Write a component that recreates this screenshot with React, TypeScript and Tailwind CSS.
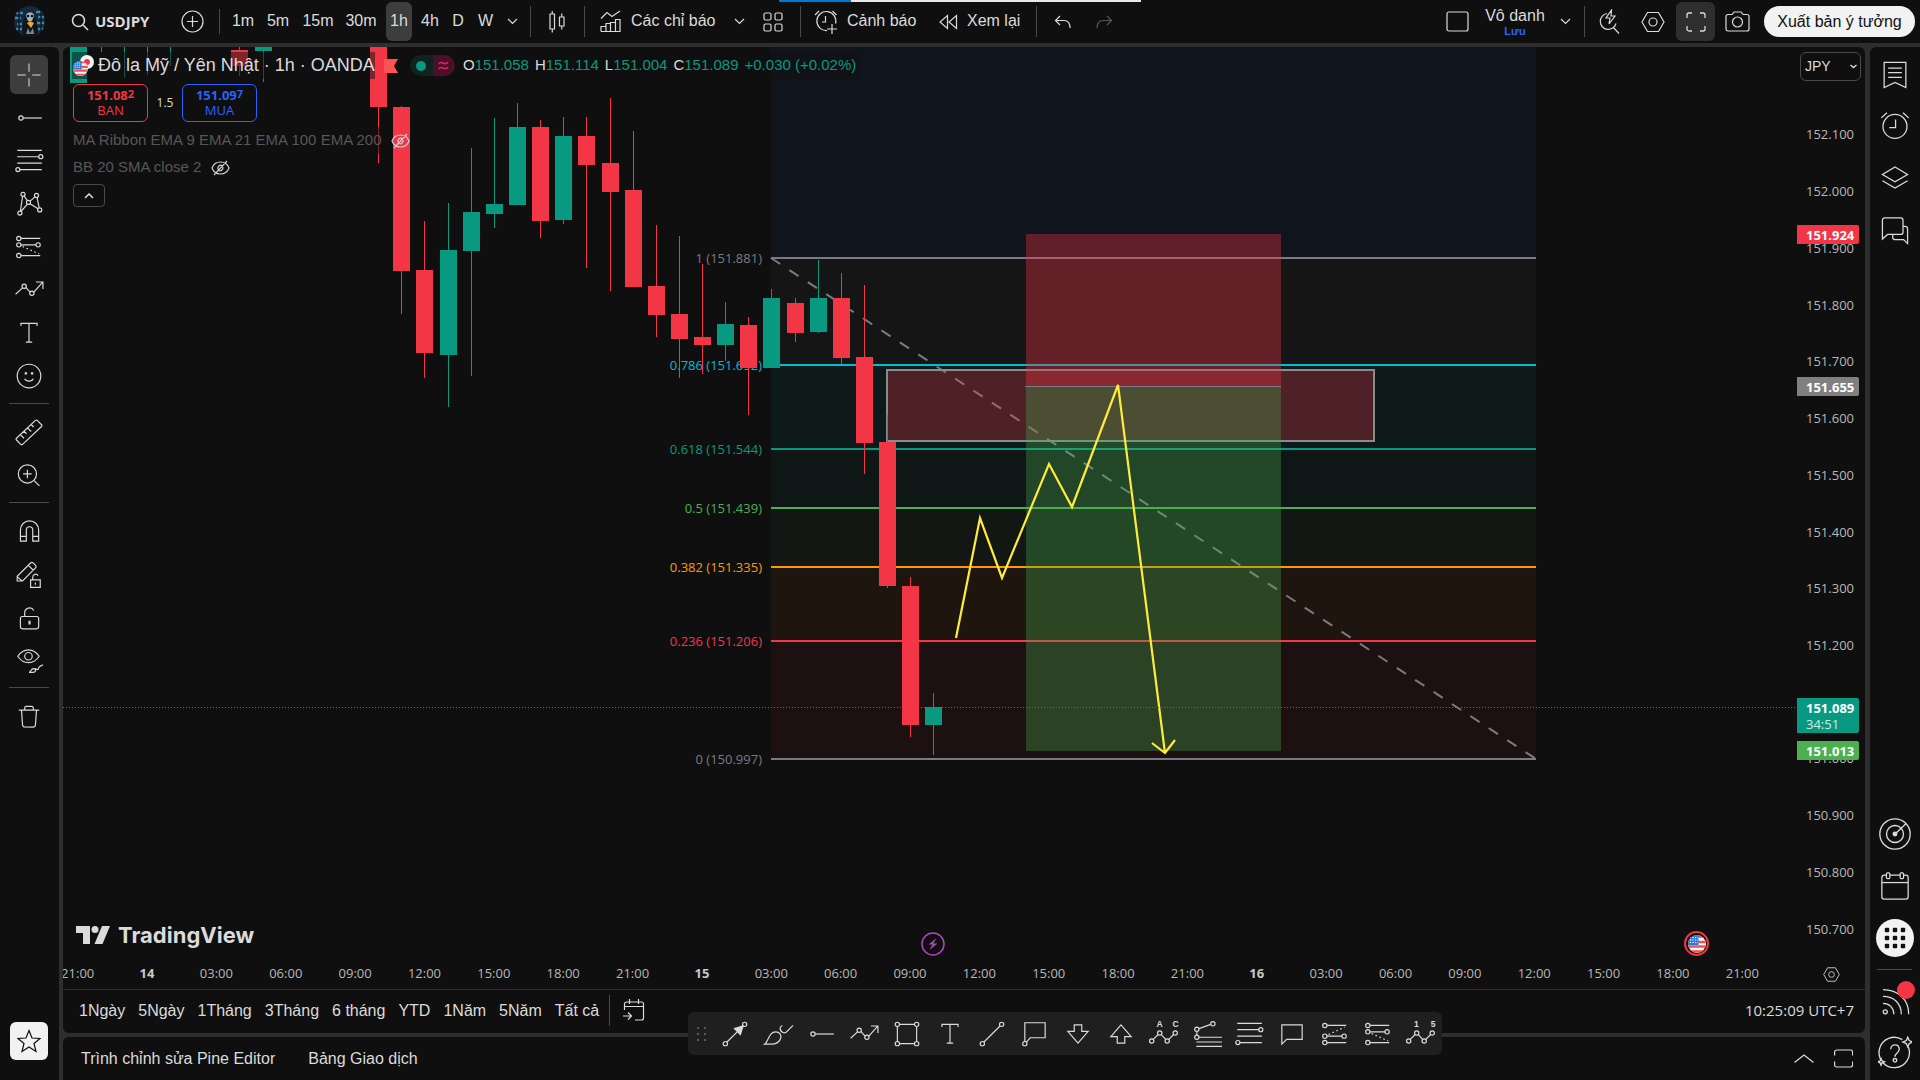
import { useState } from 'react';
import type { ReactNode } from 'react';

type IconProps = {
  children: ReactNode;
  size?: number;
  className?: string;
};

function Icon({ children, size = 31, className = '' }: IconProps) {
  return (
    <svg
      width={size}
      height={size}
      viewBox="0 0 28 28"
      fill="none"
      stroke="currentColor"
      strokeWidth={1.1}
      className={`shrink-0 ${className}`}
      aria-hidden="true"
    >
      {children}
    </svg>
  );
}

// Shared drawings: the same tool shows up in the left bar and in the favourites bar
const horizontalRay = (
  <>
    <circle cx="6.5" cy="14" r="2" />
    <path d="M8.5 14H26" />
  </>
);

const fibRetracement = (
  <>
    <path d="M3 4h23M3 10h20.500M3 16h23M5.500 22H26" />
    <circle cx="25" cy="10" r="1.9" />
    <circle cx="3.600" cy="22" r="1.9" />
  </>
);

const shortPosition = (
  <>
    <circle cx="4.500" cy="6" r="2" />
    <circle cx="4.500" cy="12" r="2" />
    <circle cx="22.500" cy="12" r="2" />
    <circle cx="4.500" cy="22" r="2" />
    <path d="M6.500 6H24.500M6.500 12h14M6.500 22h18" />
    <path d="M8 13.500l15.500 7" strokeDasharray="1.500 2.500" />
  </>
);

const longPosition = (
  <>
    <circle cx="4.500" cy="6" r="2" />
    <circle cx="4.500" cy="16" r="2" />
    <circle cx="22.500" cy="16" r="2" />
    <circle cx="4.500" cy="22" r="2" />
    <path d="M6.500 6H24.500M6.500 16h14M6.500 22h18" />
    <path d="M8 14.500l15-7" strokeDasharray="1.500 2.500" />
  </>
);

const polylineArrow = (
  <>
    <path d="M1.500 18l6.500-6M11 11.500l4 4.500M18.500 16L27 6.500M20.500 6.500H27V13" />
    <circle cx="9.500" cy="10.500" r="2" />
    <circle cx="16.700" cy="17" r="2" />
  </>
);

const textTool = <path d="M6.500 7.500V5h15v2.500M14 5v17.500M11 22.500h6" />;

type Tool = { label: string; icon: ReactNode };

const cursorTools: Tool[] = [
  { label: 'Chữ thập', icon: <path d="M14 1.500v9M14 17.500v9M1.500 14h9M17.500 14h9" /> },
  { label: 'Tia ngang', icon: horizontalRay },
  { label: 'Fibonacci', icon: fibRetracement },
  {
    label: 'Mô hình',
    icon: (
      <>
        <circle cx="8.400" cy="5" r="1.9" />
        <circle cx="21" cy="6" r="1.9" />
        <circle cx="13.500" cy="12.500" r="1.9" />
        <circle cx="5.500" cy="22.500" r="1.9" />
        <circle cx="24" cy="19.500" r="1.9" />
        <path d="M8 7L6 20.500M9.500 6.700l3 4.200M15 11.300l4.600-4M21.500 8l2 9.600M15 13.700l7.400 4.800M12.500 14.200l-6 6.800" />
      </>
    ),
  },
  { label: 'Dự báo', icon: shortPosition },
  { label: 'Đường gấp khúc', icon: polylineArrow },
  { label: 'Văn bản', icon: textTool },
  {
    label: 'Biểu tượng',
    icon: (
      <>
        <circle cx="14" cy="14" r="11" />
        <path d="M10 16.500c1.500 3 6.500 3 8 0" />
        <path d="M10 11.500h2.200M15.800 11.500H18" strokeWidth="2" />
      </>
    ),
  },
];

const measureTools: Tool[] = [
  {
    label: 'Thước đo',
    icon: (
      <path d="M2.300 19.800L20 3.200a1.200 1.200 0 0 1 1.700 0l4 4a1.200 1.200 0 0 1 0 1.700L8 25.500a1.200 1.200 0 0 1-1.700 0l-4-4a1.200 1.200 0 0 1 0-1.700zM6 16.500l3.300 3.300M9.400 13.300l2.300 2.300M12.700 10.200l3.300 3.300M16 7l2.300 2.300" />
    ),
  },
  {
    label: 'Phóng to',
    icon: (
      <>
        <circle cx="12.500" cy="13" r="8.500" />
        <path d="M8.500 13h8M12.500 9v8M18.700 19.200l5 5" />
      </>
    ),
  },
];

const lockTools: Tool[] = [
  {
    label: 'Nam châm',
    icon: (
      <path d="M6 23.500V13a8.500 8.500 0 0 1 17 0v10.500h-5.500V13a3 3 0 0 0-6 0v10.500zM6 19h5.500M17.500 19H23" />
    ),
  },
  {
    label: 'Giữ chế độ vẽ',
    icon: (
      <>
        <path d="M3 20.500v-4.300L15.500 3.700a1.600 1.600 0 0 1 2.300 0l2.300 2.300a1.600 1.600 0 0 1 0 2.300L8 20.500zM13.500 6l4.500 4.500M3 16.500l4.500 4" />
        <path d="M15.500 19.500h9v7h-9zM17.500 19.500v-2.500a2.700 2.700 0 0 1 5-1.500M20 22v2" />
      </>
    ),
  },
  {
    label: 'Khoá',
    icon: (
      <>
        <rect x="6" y="13.500" width="17" height="11.500" rx="1.800" />
        <path d="M10 13.500V10A4.500 4.500 0 0 1 18.500 8" />
        <path d="M14.500 17.500V21" strokeWidth="2" />
      </>
    ),
  },
  {
    label: 'Ẩn bản vẽ',
    icon: (
      <>
        <path d="M3.500 10.500C9 2.500 18 2.500 23.500 10.500 18 18.500 9 18.500 3.500 10.500z" />
        <circle cx="13.500" cy="10.500" r="3.500" />
        <path d="M14 25.500c2 0 1.500-3.500 4.500-3.500 2 0 2.500 3.500-1 3.500zM20 21.500c.500 2 3 2 3 0 0-1 2-2 4-3" />
      </>
    ),
  },
];

const trashTool: Tool = {
  label: 'Xoá',
  icon: <path d="M4.500 8.500h19M10 8.500V6.500a1.500 1.500 0 0 1 1.500-1.500h5A1.500 1.500 0 0 1 18 6.500v2M7 8.500l1 14a2 2 0 0 0 2 1.800h8a2 2 0 0 0 2-1.800l1-14" />,
};

const waveLabel = 'fill-current stroke-none font-[Liberation_Sans] text-[8px] font-bold';

const elliottPoints = (
  <>
    <circle cx="2.500" cy="20.500" r="2" />
    <circle cx="10" cy="13" r="2" />
    <circle cx="17" cy="20.500" r="2" />
    <circle cx="24.500" cy="13" r="2" />
    <path d="M4 19l4.500-4.500M11.400 14.500l4.200 4.500M18.500 19l4.500-4.500" />
  </>
);

const favouriteTools: Tool[] = [
  {
    label: 'Mũi tên',
    icon: (
      <>
        <circle cx="5" cy="23" r="2" />
        <circle cx="23" cy="5" r="2" />
        <path d="M6.500 21.500L16.500 11.500" />
        <path d="M21.500 6.500l-2.500 8-5.500-5.500z" fill="currentColor" />
      </>
    ),
  },
  {
    label: 'Cọ vẽ',
    icon: (
      <path d="M1.500 23.500c4-2.500 3.500-11.500 10.500-11.500 3.500 0 5.500 3 4.500 6-1.200 4-5 5.500-9 5.500zM16 8.500c0 4.500 4.500 5.500 6.500 3l5.500-5.500M16 8.500c0-1.500 1-2 2-2.500" />
    ),
  },
  { label: 'Tia ngang', icon: horizontalRay },
  { label: 'Đường gấp khúc', icon: polylineArrow },
  {
    label: 'Hình chữ nhật',
    icon: (
      <>
        <circle cx="5" cy="5" r="2" />
        <circle cx="23" cy="5" r="2" />
        <circle cx="5" cy="23" r="2" />
        <circle cx="23" cy="23" r="2" />
        <path d="M7 5h14M7 23h14M5 7v14M23 7v14" />
      </>
    ),
  },
  { label: 'Văn bản', icon: textTool },
  {
    label: 'Đường xu hướng',
    icon: (
      <>
        <circle cx="5" cy="23" r="2" />
        <circle cx="23" cy="5" r="2" />
        <path d="M6.500 21.500l15-15" />
      </>
    ),
  },
  {
    label: 'Chú thích',
    icon: (
      <>
        <circle cx="4.500" cy="23" r="2" />
        <path d="M4.500 21V3.500h19v14H9.500l-3.500 4" />
      </>
    ),
  },
  { label: 'Mũi tên xuống', icon: <path d="M10.500 5.500h7v6h6L14 22.500 4.500 11.500h6z" /> },
  { label: 'Mũi tên lên', icon: <path d="M10.500 22.500h7v-6h6L14 5.500 4.500 16.500h6z" /> },
  {
    label: 'Sóng ABC',
    icon: (
      <>
        {elliottPoints}
        <text x="7" y="7" className={waveLabel}>A</text>
        <text x="22" y="7" className={waveLabel}>C</text>
      </>
    ),
  },
  {
    label: 'Fibonacci mở rộng',
    icon: (
      <>
        <circle cx="4.500" cy="9.500" r="2" />
        <circle cx="19.500" cy="4.500" r="2" />
        <circle cx="4.500" cy="17" r="2" />
        <path d="M6.500 9l11-4M4.500 11.500V15M6.500 17H28M4 21.500h24M4 25.500h24" />
      </>
    ),
  },
  { label: 'Fibonacci', icon: fibRetracement },
  { label: 'Bình luận', icon: <path d="M4.500 23.500V5.500h19v13.500H9z" /> },
  { label: 'Vị thế mua', icon: longPosition },
  { label: 'Vị thế bán', icon: shortPosition },
  {
    label: 'Sóng 12345',
    icon: (
      <>
        {elliottPoints}
        <text x="7.500" y="7" className={waveLabel}>1</text>
        <text x="23" y="7" className={waveLabel}>5</text>
      </>
    ),
  },
];

const rightTopTools: Tool[] = [
  {
    label: 'Danh sách theo dõi',
    icon: <path d="M4.500 3h19v22L14 20.500 4.500 25zM8 8h12M8 12h12M8 16h12" />,
  },
  {
    label: 'Cảnh báo',
    icon: (
      <>
        <circle cx="14" cy="13.500" r="10.500" />
        <path d="M14.500 7.500v7H9M2 6l5-4.500M26 6L21 1.500" />
      </>
    ),
  },
  {
    label: 'Cây đối tượng',
    icon: <path d="M14 3.500l11 6.500-11 6.500L3 10zM3 15.500L14 22l11-6.500" />,
  },
  {
    label: 'Trò chuyện',
    icon: (
      <>
        <path d="M3 19.500V4.500A2 2 0 0 1 5 2.500h14a2 2 0 0 1 2 2V15a2 2 0 0 1-2 2H7.500L3 21z" />
        <path d="M21 10h2a2 2 0 0 1 2 2v13l-3.500-3.500H14a2 2 0 0 1-2-2V17" />
      </>
    ),
  },
];

const intervals = [
  { label: '1m', width: 'w-[34px]' },
  { label: '5m', width: 'w-9' },
  { label: '15m', width: 'w-11' },
  { label: '30m', width: 'w-[42px]' },
  { label: '1h', width: 'w-[26px] mx-1' },
  { label: '4h', width: 'w-7' },
  { label: 'D', width: 'w-7' },
  { label: 'W', width: 'w-[27px]' },
];

const ranges = ['1Ngày', '5Ngày', '1Tháng', '3Tháng', '6 tháng', 'YTD', '1Năm', '5Năm', 'Tất cả'];

const timeLabels = [
  '21:00', '14', '03:00', '06:00', '09:00', '12:00', '15:00', '18:00', '21:00',
  '15', '03:00', '06:00', '09:00', '12:00', '15:00', '18:00', '21:00',
  '16', '03:00', '06:00', '09:00', '12:00', '15:00', '18:00', '21:00',
];

const priceLabels = [
  '152.100', '152.000', '151.900', '151.800', '151.700', '151.600', '151.500', '151.400',
  '151.300', '151.200', '151.100', '151.000', '150.900', '150.800', '150.700',
];

const UP = '#089981';
const DOWN = '#f23645';

// [x, body top, body bottom, wick top, wick bottom, color]
const candles: [number, number, number, number, number, string][] = [
  [78, 0, 83, 0, 83, UP],
  [101, 0, 0, 0, 52, DOWN],
  [124, 0, 0, 0, 78, UP],
  [147, 0, 0, 0, 75, DOWN],
  [170, 0, 0, 0, 66, UP],
  [239, 50, 66, 0, 76, DOWN],
  [263, 0, 51, 0, 82, UP],
  [378, 0, 107, 0, 163, DOWN],
  [401, 107, 271, 106, 314, DOWN],
  [424, 270, 353, 221, 378, DOWN],
  [448, 250, 355, 203, 407, UP],
  [471, 212, 251, 148, 376, UP],
  [494, 204, 214, 118, 228, UP],
  [517, 127, 205, 103, 205, UP],
  [540, 127, 221, 120, 238, DOWN],
  [563, 136, 220, 117, 224, UP],
  [586, 136, 165, 117, 268, DOWN],
  [610, 163, 192, 98, 291, DOWN],
  [633, 190, 287, 131, 287, DOWN],
  [656, 286, 315, 225, 337, DOWN],
  [679, 314, 339, 236, 378, DOWN],
  [702, 337, 345, 264, 374, DOWN],
  [725, 324, 345, 302, 361, UP],
  [748, 325, 368, 317, 415, DOWN],
  [771, 298, 368, 289, 368, UP],
  [795, 303, 333, 298, 342, DOWN],
  [818, 298, 332, 260, 333, UP],
  [841, 298, 358, 273, 364, DOWN],
  [864, 357, 443, 285, 474, DOWN],
  [887, 442, 586, 415, 588, DOWN],
  [910, 586, 725, 577, 737, DOWN],
  [933, 707, 725, 693, 755, UP],
];

const fibLevels = [
  { label: '1 (151.881)', y: 258, color: '#787b86' },
  { label: '0.786 (151.692)', y: 365, color: '#00bcd4' },
  { label: '0.618 (151.544)', y: 449, color: '#089981' },
  { label: '0.5 (151.439)', y: 508, color: '#4caf50' },
  { label: '0.382 (151.335)', y: 567, color: '#ff9800' },
  { label: '0.236 (151.206)', y: 641, color: '#f23645' },
  { label: '0 (150.997)', y: 759, color: '#787b86' },
];

const fibZones = [
  { y: 0, height: 258, color: '#10141c' },
  { y: 258, height: 107, color: '#151515' },
  { y: 365, height: 84, color: '#0e1a1a' },
  { y: 449, height: 59, color: '#0f1716' },
  { y: 508, height: 59, color: '#121713' },
  { y: 567, height: 74, color: '#1e160e' },
  { y: 641, height: 118, color: '#1c1011' },
];

function Divider() {
  return (
    <div className="flex w-2 shrink-0 justify-center">
      <div className="h-[31px] w-px bg-[#4a4a4a]" />
    </div>
  );
}

function Chevron() {
  return (
    <svg width="11" height="7" viewBox="0 0 11 7" fill="none" stroke="currentColor" strokeWidth="1.2" aria-hidden="true">
      <path d="M1 1l4.500 4.500L10 1" />
    </svg>
  );
}

function UsFlag({ size }: { size: number }) {
  return (
    <svg width={size} height={size} viewBox="0 0 18 18" className="rounded-full" aria-hidden="true">
      <rect width="18" height="18" fill="#f5f5f5" />
      <path d="M0 1.500h18M0 7h18M0 11.500h18M0 16.500h18" stroke="#ef5350" strokeWidth="2.500" />
      <rect width="10.500" height="10" fill="#2a7de1" />
      <path d="M2 2.500h8M2 5h8M2 7.500h8" stroke="#fff" strokeWidth="1.200" strokeDasharray="1.200 1.300" />
    </svg>
  );
}

function Avatar() {
  return (
    <svg width="31" height="31" viewBox="0 0 31 31" className="rounded-full" aria-hidden="true">
      <rect width="31" height="31" fill="#16293a" />
      <path d="M2 7h7M22 6h8M1 12h6M24 11h6M3 18h5M23 17h7M2 23h6M24 23h6" stroke="#3f86a8" strokeWidth="2.500" />
      <path d="M5 4v22M27 3v24" stroke="#0d1a26" strokeWidth="1.500" />
      <path d="M9 31c-1-9 0-17 3-22 1-5 6-5 7 0 4 5 5 13 4 22z" fill="#10141c" />
      <path d="M12 10c0-5 8-5 8 0l-2 5h-4z" fill="#9fb3bd" />
      <path d="M13 17l3-2 4 2-3 5z" fill="#f0a52e" />
      <path d="M12 28l2-6 2 5 3-5 1 6z" fill="#7b8b95" />
      <circle cx="14" cy="10" r="1.300" fill="#0b0f14" />
      <circle cx="18" cy="10" r="1.300" fill="#0b0f14" />
    </svg>
  );
}

function HiddenEye() {
  return (
    <svg width="19" height="16" viewBox="0 0 19 16" fill="none" stroke="#d1d1d1" strokeWidth="1.200" aria-hidden="true">
      <path d="M1 8c3-8 14-8 17 0-3 8-14 8-17 0zM3 15L16 1M7 9.500c-1-3 2-5 4-4M12 7c.500 2.500-2 4.500-4 3.500" />
    </svg>
  );
}

function SettingsHex({ size }: { size: number }) {
  return (
    <svg width={size} height={size} viewBox="0 0 24 24" fill="none" stroke="currentColor" strokeWidth="1.200" aria-hidden="true">
      <path d="M6.500 2.500h11L23 12l-5.500 9.500h-11L1 12z" />
      <circle cx="12" cy="12" r="4" />
    </svg>
  );
}

function TopBar() {
  const [interval, setInterval] = useState('1h');

  return (
    <header className="relative flex h-[43px] shrink-0 items-center bg-[#0f0f0f] text-base">
      <button className="flex w-[63px] shrink-0 pl-[14px]" aria-label="Hồ sơ">
        <Avatar />
      </button>
      <button className="flex w-[109px] shrink-0 items-center gap-1.5 pl-2">
        <svg width="18" height="18" viewBox="0 0 18 18" fill="none" stroke="currentColor" strokeWidth="1.600" aria-hidden="true">
          <circle cx="7.500" cy="7.500" r="6" />
          <path d="M12 12l5 5" />
        </svg>
        <span className="pb-0.5 font-[Open_Sans] text-[15px] leading-5 font-bold">USDJPY</span>
      </button>
      <button className="flex w-10 shrink-0 justify-center" aria-label="So sánh">
        <svg width="23" height="23" viewBox="0 0 23 23" fill="none" stroke="currentColor" strokeWidth="1.200" aria-hidden="true">
          <circle cx="11.500" cy="11.500" r="10.500" />
          <path d="M11.500 6v11M6 11.500h11" />
        </svg>
      </button>
      <div className="flex w-[14px] shrink-0 justify-center">
        <div className="h-[25px] w-px bg-[#4a4a4a]" />
      </div>
      {intervals.map((item) => (
        <button
          key={item.label}
          onClick={() => setInterval(item.label)}
          className={`h-[39px] shrink-0 rounded-md pb-0.5 text-center ${item.width} ${
            interval === item.label ? 'bg-[#3d3d3d]' : ''
          }`}
        >
          {item.label}
        </button>
      ))}
      <button className="flex w-[27px] shrink-0 justify-center" aria-label="Khung thời gian">
        <Chevron />
      </button>
      <Divider />
      <button className="flex w-[46px] shrink-0 justify-center" aria-label="Nến">
        <svg width="18" height="23" viewBox="0 0 18 23" fill="none" stroke="currentColor" strokeWidth="1.200" aria-hidden="true">
          <path d="M2 4h4.500v15H2zM4.250 1v3M4.250 19v3.500M11.500 7H16v9h-4.500zM13.750 3.500V7M13.750 16v3.500" />
        </svg>
      </button>
      <Divider />
      <button className="flex w-[138px] shrink-0 items-center gap-[10px] pl-3">
        <svg width="21" height="23" viewBox="0 0 21 23" fill="none" stroke="currentColor" strokeWidth="1.200" aria-hidden="true">
          <path d="M1 8.500l6-6 5 4L20 1M1 21.500h19V9.500h-4.500v12M10.500 21.500v-9H15.500M10.500 16v-2.500H6v8M1 21.500v-5h5" />
        </svg>
        <span className="whitespace-nowrap pb-0.5">Các chỉ báo</span>
      </button>
      <button className="flex w-[26px] shrink-0 justify-center" aria-label="Chỉ báo yêu thích">
        <Chevron />
      </button>
      <button className="flex w-11 shrink-0 justify-center pr-0.5" aria-label="Mẫu">
        <svg width="20" height="20" viewBox="0 0 20 20" fill="none" stroke="currentColor" strokeWidth="1.200" aria-hidden="true">
          <rect x="1" y="1" width="7" height="7" rx="1.500" />
          <rect x="12" y="1" width="7" height="7" rx="1.500" />
          <rect x="1" y="12" width="7" height="7" rx="1.500" />
          <rect x="12" y="12" width="7" height="7" rx="1.500" />
        </svg>
      </button>
      <Divider />
      <button className="flex w-[125px] shrink-0 items-center gap-[9px] pl-[10px]">
        <svg width="24" height="25" viewBox="0 0 24 25" fill="none" stroke="currentColor" strokeWidth="1.200" aria-hidden="true">
          <path d="M13 21.500a9.500 9.500 0 1 1 8.500-7M11.500 7v6H8M1 6l4-4M22.500 6l-4-4M18 15v10M13 20h10" />
        </svg>
        <span className="whitespace-nowrap pb-0.5">Cảnh báo</span>
      </button>
      <button className="flex w-[103px] shrink-0 items-center gap-[9px] pl-[9px]">
        <svg width="20" height="16" viewBox="0 0 20 16" fill="none" stroke="currentColor" strokeWidth="1.200" aria-hidden="true">
          <path d="M9.500 1.500v13L2 8zM18.500 1.500v13L11 8z" />
        </svg>
        <span className="whitespace-nowrap pb-0.5">Xem lại</span>
      </button>
      <Divider />
      <button className="flex w-[45px] shrink-0 justify-center" aria-label="Hoàn tác">
        <svg width="17" height="14" viewBox="0 0 17 14" fill="none" stroke="currentColor" strokeWidth="1.200" aria-hidden="true">
          <path d="M6 1L1.500 5.500 6 10M1.500 5.500H10c4 0 6 3 6 7.500" />
        </svg>
      </button>
      <button className="flex w-[39px] shrink-0 justify-center text-[#575757]" aria-label="Làm lại">
        <svg width="17" height="14" viewBox="0 0 17 14" fill="none" stroke="currentColor" strokeWidth="1.200" aria-hidden="true">
          <path d="M11 1l4.500 4.500L11 10M15.500 5.500H7c-4 0-6 3-6 7.500" />
        </svg>
      </button>

      <div className="flex-1" />

      <button className="flex w-[46px] shrink-0 justify-center" aria-label="Bố cục">
        <svg width="23" height="21" viewBox="0 0 23 21" fill="none" stroke="currentColor" strokeWidth="1.200" aria-hidden="true">
          <rect x="1" y="1" width="21" height="19" rx="2" />
        </svg>
      </button>
      <button className="flex w-[70px] shrink-0 flex-col items-center">
        <span className="leading-[18px]">Vô danh</span>
        <span className="text-[11px] leading-3 font-bold text-[#2962ff]">Lưu</span>
      </button>
      <button className="flex w-[30px] shrink-0 justify-center" aria-label="Quản lý bố cục">
        <Chevron />
      </button>
      <Divider />
      <button className="flex w-[42px] shrink-0 justify-center" aria-label="Tìm kiếm nhanh">
        <svg width="22" height="25" viewBox="0 0 22 25" fill="none" stroke="currentColor" strokeWidth="1.200" aria-hidden="true">
          <path d="M9 4.500a8 8 0 1 0 9 10M15 18l6 6.500M13.500 1L8 9h4l-1 6 6-8h-4z" />
        </svg>
      </button>
      <button className="flex w-[46px] shrink-0 justify-center" aria-label="Cài đặt">
        <SettingsHex size={24} />
      </button>
      <button className="flex h-[39px] w-[39px] shrink-0 items-center justify-center rounded-md bg-[#2e2e2e]" aria-label="Toàn màn hình">
        <svg width="20" height="20" viewBox="0 0 20 20" fill="none" stroke="currentColor" strokeWidth="1.300" aria-hidden="true">
          <path d="M1 6V3a2 2 0 0 1 2-2h3M14 1h3a2 2 0 0 1 2 2v3M19 14v3a2 2 0 0 1-2 2h-3M6 19H3a2 2 0 0 1-2-2v-3" />
        </svg>
      </button>
      <button className="flex w-[49px] shrink-0 items-center pl-[10px]" aria-label="Chụp ảnh">
        <svg width="25" height="21" viewBox="0 0 25 21" fill="none" stroke="currentColor" strokeWidth="1.200" aria-hidden="true">
          <path d="M1 5.500a2 2 0 0 1 2-2h4l2-2.500h7l2 2.500h4a2 2 0 0 1 2 2V18a2 2 0 0 1-2 2H3a2 2 0 0 1-2-2z" />
          <circle cx="12.500" cy="11" r="5" />
        </svg>
      </button>
      <button className="mr-[5px] h-[31px] w-[151px] shrink-0 rounded-full bg-[#f2f2f2] whitespace-nowrap text-[#0f0f0f]">
        Xuất bản ý tưởng
      </button>

      <div className="absolute top-0 left-[779px] flex h-0.5 w-[362px] bg-[#e8e8e8]">
        <div className="w-[72px] bg-[#0078d7]" />
      </div>
    </header>
  );
}

function ToolButton({ tool, active }: { tool: Tool; active?: boolean }) {
  return (
    <button className="flex h-[43px] w-full items-center justify-center" aria-label={tool.label}>
      <span className={`flex h-[39px] w-[38px] items-center justify-center rounded-md ${active ? 'bg-[#3d3d3d]' : ''}`}>
        <Icon size={active ? 26 : 30}>{tool.icon}</Icon>
      </span>
    </button>
  );
}

function ToolDivider() {
  return (
    <div className="flex h-[13px] w-full items-center px-[9px]">
      <div className="h-px w-full bg-[#4a4a4a]" />
    </div>
  );
}

function LeftBar() {
  return (
    <aside className="flex w-[59px] shrink-0 flex-col items-center rounded-tr-md bg-[#0f0f0f] pt-1.5 pr-px pb-5">
      {cursorTools.map((tool, i) => (
        <ToolButton key={tool.label} tool={tool} active={i === 0} />
      ))}
      <ToolDivider />
      {measureTools.map((tool) => (
        <ToolButton key={tool.label} tool={tool} />
      ))}
      <ToolDivider />
      {lockTools.map((tool) => (
        <ToolButton key={tool.label} tool={tool} />
      ))}
      <ToolDivider />
      <ToolButton tool={trashTool} />
      <button
        className="mt-auto flex h-[38px] w-[38px] items-center justify-center rounded-md bg-[#f2f2f2] text-[#0f0f0f]"
        aria-label="Thanh công cụ yêu thích"
      >
        <svg width="24" height="24" viewBox="0 0 24 24" fill="none" stroke="currentColor" strokeWidth="1.200" aria-hidden="true">
          <path d="M12 1.500l3 7.500 8 .500-6 5 2 8-7-4.500L5 22.500l2-8-6-5L9 9z" />
        </svg>
      </button>
    </aside>
  );
}

function RightBar() {
  return (
    <aside className="flex w-[50px] shrink-0 flex-col items-center rounded-tl-md bg-[#0f0f0f] pt-0.5 pr-px pb-px">
      {rightTopTools.map((tool) => (
        <button key={tool.label} className="flex h-[52px] items-center" aria-label={tool.label}>
          <Icon size={32}>{tool.icon}</Icon>
        </button>
      ))}
      <div className="flex-1" />
      <button className="flex h-[52px] items-center" aria-label="Bộ lọc">
        <Icon size={34}>
          <circle cx="14" cy="14" r="12.500" />
          <circle cx="14" cy="14" r="7" />
          <circle cx="14" cy="14" r="1.500" fill="currentColor" />
          <path d="M14 14l9-8.500" />
        </Icon>
      </button>
      <button className="flex h-[52px] items-center" aria-label="Lịch">
        <Icon size={32}>
          <rect x="2.500" y="4.500" width="23" height="21" rx="2" />
          <path d="M2.500 11h23" />
          <rect x="6.500" y="2.500" width="3" height="5" rx="1" fill="#0f0f0f" />
          <rect x="18.500" y="2.500" width="3" height="5" rx="1" fill="#0f0f0f" />
        </Icon>
      </button>
      <button className="flex h-[52px] items-center" aria-label="Sản phẩm">
        <svg width="38" height="38" viewBox="0 0 38 38" aria-hidden="true">
          <circle cx="19" cy="19" r="19" fill="#f2f2f2" />
          {[11, 19, 27].map((cy) =>
            [11, 19, 27].map((cx) => (
              <rect key={`${cx}-${cy}`} x={cx - 2.2} y={cy - 2.2} width="4.400" height="4.400" rx="1" fill="#0f0f0f" />
            ))
          )}
        </svg>
      </button>
      <div className="flex h-[11px] w-full items-center px-[7px]">
        <div className="h-px w-full bg-[#4a4a4a]" />
      </div>
      <button className="relative flex h-[52px] items-center" aria-label="Luồng ý tưởng">
        <Icon size={32}>
          <circle cx="5.500" cy="23.500" r="1.800" />
          <path d="M3.500 16c5.500 0 9.500 4 9.500 9.500M3.500 10C13 10 19.500 16 19.500 25.500M3.500 4C17 4 26 13 26 25.500" />
        </Icon>
        <span className="absolute top-1.5 -right-1 h-[18px] w-[18px] rounded-full bg-[#f23645]" />
      </button>
      <button className="flex h-[52px] items-center" aria-label="Trợ giúp">
        <Icon size={34}>
          <path d="M20 3a12.500 12.500 0 1 0 5 6" />
          <path d="M10.500 11c0-5 7-5 7 0 0 3-3.500 3-3.500 6" />
          <circle cx="14" cy="20" r="1.500" />
          <path d="M24.500 1l1.200 2.800 2.800 1.200-2.800 1.200-1.200 2.800-1.200-2.800L20.500 5l2.800-1.200zM2.500 18.500l.800 2 2 .800-2 .800-.800 2-.800-2-2-.800 2-.800z" fill="#0f0f0f" />
        </Icon>
      </button>
    </aside>
  );
}

// Plot coordinates are window based, the group is shifted by the size of the bars around it
function Plot() {
  return (
    <svg className="absolute inset-0 h-full w-full" aria-hidden="true">
      <g transform="translate(-63 -47)" shapeRendering="crispEdges">
        {fibZones.map((zone) => (
          <rect key={zone.y} x="771" y={zone.y} width="765" height={zone.height} fill={zone.color} />
        ))}
        {fibLevels.map((level) => (
          <g key={level.label}>
            <rect x="771" y={level.y - 1} width="765" height="2" fill={level.color} />
            <text
              x="762"
              y={level.y + 5}
              textAnchor="end"
              fill={level.color}
              className="font-[Open_Sans] text-[13px]"
            >
              {level.label}
            </text>
          </g>
        ))}
        <path
          d="M771 258L1536 759"
          stroke="#787b86"
          strokeWidth="2"
          strokeDasharray="11 11"
          shapeRendering="auto"
        />
        <rect x="887" y="370" width="487" height="71" fill="#f23645" fillOpacity="0.28" stroke="#878c8c" strokeWidth="2" />

        {candles.map(([x, top, bottom, wickTop, wickBottom, color]) => (
          <g key={x} fill={color}>
            <rect x={x} y={wickTop} width="1" height={wickBottom - wickTop} />
            <rect x={x - 8} y={top} width="17" height={bottom - top} />
          </g>
        ))}

        <rect x="1026" y="234" width="255" height="152" fill="#f23645" fillOpacity="0.36" />
        <rect x="1026" y="386" width="255" height="365" fill="#4caf50" fillOpacity="0.32" />
        <rect x="1025" y="386" width="256" height="1" fill="#787b86" />

        <path
          d="M956 638L980 518l22 60 47-114 23 43 46-122 47 368M1152 743l13 10 10-13"
          fill="none"
          stroke="#ffeb3b"
          strokeWidth="2.200"
          shapeRendering="auto"
        />
        <path d="M63 707.500H1797" stroke={UP} strokeDasharray="1 2" />
      </g>
    </svg>
  );
}

function Ohlc({ name, value }: { name: string; value: string }) {
  return (
    <span>
      {name}
      <span className="text-[#089981]">{value}</span>
    </span>
  );
}

function QuoteButton({ price, pip, label, className }: { price: string; pip: string; label: string; className: string }) {
  return (
    <button className={`flex h-[38px] w-[75px] flex-col items-center justify-center rounded-md border bg-[#0f0f0f] font-[Open_Sans] ${className}`}>
      <span className="flex text-[13px] leading-[15px] font-bold">
        {price}
        <span className="text-[11px] leading-3">{pip}</span>
      </span>
      <span className="text-[13px] leading-[15px]">{label}</span>
    </button>
  );
}

function Legend() {
  return (
    <div className="absolute top-[5px] left-[9px] flex flex-col items-start">
      <div className="flex h-[27px] items-center">
        <div className="flex h-full w-[303px] items-center gap-1 bg-[#0f0f0f]/50 pl-px">
          <span className="relative h-[25px] w-[21px] shrink-0">
            <svg width="14" height="14" viewBox="0 0 14 14" className="absolute top-0.5 right-0" aria-hidden="true">
              <circle cx="7" cy="7" r="7" fill="#f5f5f5" />
              <circle cx="7" cy="7" r="3" fill="#f23645" />
            </svg>
            <span className="absolute bottom-0.5 left-0 rounded-full">
              <UsFlag size={15} />
            </span>
          </span>
          <h1 className="pb-px text-[18px] leading-6 whitespace-nowrap">Đô la Mỹ / Yên Nhật · 1h · OANDA</h1>
        </div>
        <svg width="14" height="14" viewBox="0 0 14 14" className="ml-[9px] shrink-0" aria-hidden="true">
          <path d="M0 0h14l-4 7 4 7H0z" fill="#ff5252" />
        </svg>
        <div className="ml-3 flex h-[21px] w-[45px] shrink-0 overflow-hidden rounded-full">
          <span className="flex flex-1 items-center justify-center bg-[#10231f]">
            <span className="h-[10px] w-[10px] rounded-full bg-[#089981]" />
          </span>
          <span className="flex flex-1 items-center justify-center bg-[#4a1029]">
            <svg width="11" height="9" viewBox="0 0 11 9" fill="none" stroke="#e91e63" strokeWidth="1.500" aria-hidden="true">
              <path d="M.500 3c2-2.500 3.500-1.500 5-.800s3 1 4.500-1.200M.500 8c2-2.500 3.500-1.500 5-.800s3 1 4.500-1.200" />
            </svg>
          </span>
        </div>
        <div className="ml-1 flex h-full items-center gap-1.5 bg-[#0f0f0f]/50 px-1 text-[15px] whitespace-nowrap">
          <Ohlc name="O" value="151.058" />
          <Ohlc name="H" value="151.114" />
          <Ohlc name="L" value="151.004" />
          <Ohlc name="C" value="151.089" />
          <span className="text-[#089981]">+0.030 (+0.02%)</span>
        </div>
      </div>
      <div className="mt-[5px] ml-px flex items-center">
        <QuoteButton price="151.08" pip="2" label="BAN" className="border-[#f23645] text-[#f23645]" />
        <span className="w-[34px] text-center font-[Open_Sans] text-[12px] font-medium">1.5</span>
        <QuoteButton price="151.09" pip="7" label="MUA" className="border-[#2962ff] text-[#2962ff]" />
      </div>
      <div className="mt-[5px] flex h-[27px] items-center text-[15px] text-[#575757]">
        <span className="flex h-full items-center bg-[#0f0f0f]/50 pr-[9px] pl-px whitespace-nowrap">
          MA Ribbon EMA 9 EMA 21 EMA 100 EMA 200
        </span>
        <HiddenEye />
      </div>
      <div className="flex h-[27px] items-center gap-[10px] pl-px text-[15px] text-[#575757]">
        <span>BB 20 SMA close 2</span>
        <HiddenEye />
      </div>
      <button
        className="mt-[3px] ml-px flex h-[23px] w-8 items-center justify-center rounded-sm border border-[#4a4a4a]"
        aria-label="Thu gọn chú giải"
      >
        <svg width="10" height="6" viewBox="0 0 10 6" fill="none" stroke="currentColor" strokeWidth="1.500" aria-hidden="true">
          <path d="M1 5l4-4 4 4" />
        </svg>
      </button>
    </div>
  );
}

function TradingViewLogo() {
  return (
    <div className="absolute bottom-[7px] left-[13px] flex h-[30px] items-center gap-2 text-[#dbdbdb]">
      <svg width="34" height="18" viewBox="0 0 34 18" fill="currentColor" aria-hidden="true">
        <path d="M0 0h14v18H7V7H0z" />
        <circle cx="19" cy="3.500" r="3.500" />
        <path d="M26 0h8l-7.500 18h-8z" />
      </svg>
      <span className="font-[Inter] text-[22px] leading-7 font-bold">TradingView</span>
    </div>
  );
}

function PriceTag({ className, children }: { className: string; children: ReactNode }) {
  return (
    <div className={`absolute left-0 flex w-[62px] flex-col justify-center rounded-r-xs pl-[9px] font-bold text-white ${className}`}>
      {children}
    </div>
  );
}

function PriceAxis() {
  return (
    <div className="relative flex w-[68px] shrink-0 flex-col font-[Open_Sans] text-[13px] leading-4 text-[#b8b8b8]">
      <div className="h-[59px] shrink-0 pt-[5px] pl-[3px]">
        <div className="relative h-[29px] w-[61px]">
          <select
            aria-label="Tiền tệ"
            className="h-full w-full appearance-none rounded-md border border-[#4a4a4a] bg-[#0f0f0f] pb-0.5 pl-1 font-[Liberation_Sans] text-[14px] text-[#dbdbdb]"
          >
            <option>JPY</option>
          </select>
          <svg width="7" height="5" viewBox="0 0 7 5" fill="none" stroke="#dbdbdb" strokeWidth="1.400" className="absolute top-3 right-1" aria-hidden="true">
            <path d="M.500 1l3 2.500 3-2.500" />
          </svg>
        </div>
      </div>
      {priceLabels.map((price) => (
        <div key={price} className="flex flex-1 items-center pl-[9px]">
          {price}
        </div>
      ))}
      <PriceTag className="top-[178px] h-[19px] bg-[#f23645]">151.924</PriceTag>
      <PriceTag className="top-[330px] h-[19px] bg-[#808080]">151.655</PriceTag>
      <PriceTag className="top-[651px] h-[35px] bg-[#089981]">
        <span>151.089</span>
        <span className="font-normal text-white/80">34:51</span>
      </PriceTag>
      <PriceTag className="top-[694px] h-[19px] bg-[#4caf50]">151.013</PriceTag>
    </div>
  );
}

function Chart() {
  return (
    <section className="flex min-h-0 flex-1 flex-col overflow-hidden rounded-md bg-[#0f0f0f]">
      <div className="flex min-h-0 flex-1">
        <div className="relative min-w-0 flex-1 overflow-hidden">
          <Plot />
          <Legend />
          <TradingViewLogo />
          <button className="absolute bottom-px left-[858px]" aria-label="Tin tức">
            <svg width="24" height="24" viewBox="0 0 24 24" fill="none" aria-hidden="true">
              <circle cx="12" cy="12" r="11" stroke="#ab47bc" strokeWidth="1.500" />
              <path d="M15.500 6L7.500 12.500h4L8.500 18l8-6.500h-4z" fill="#ab47bc" />
            </svg>
          </button>
          <button
            className="absolute right-[88px] bottom-px flex h-[25px] w-[25px] items-center justify-center rounded-full border-2 border-[#f23645]"
            aria-label="Sự kiện kinh tế"
          >
            <UsFlag size={18} />
          </button>
        </div>
        <PriceAxis />
      </div>
      <div className="flex h-8 shrink-0 font-[Open_Sans] text-[13px] text-[#b8b8b8]">
        <div className="min-w-0 flex-1 overflow-hidden">
          <div className="mr-5 -ml-5 flex h-full items-center pt-0.5">
            {timeLabels.map((label, i) => (
              <span key={i} className={`flex-1 text-center ${label.includes(':') ? '' : 'font-bold text-[#c8c8c8]'}`}>
                {label}
              </span>
            ))}
          </div>
        </div>
        <button className="flex w-[68px] shrink-0 items-center justify-center pt-0.5 text-[#dbdbdb]" aria-label="Cài đặt thang đo">
          <SettingsHex size={17} />
        </button>
      </div>
      <div className="flex h-11 shrink-0 items-center border-t border-[#2e2e2e] pr-[11px] pb-0.5 pl-[10px]">
        <div className="flex gap-px">
          {ranges.map((range) => (
            <button key={range} className="px-1.5 text-base whitespace-nowrap">
              {range}
            </button>
          ))}
        </div>
        <Divider />
        <button className="ml-[10px]" aria-label="Đi tới ngày">
          <svg width="22" height="23" viewBox="0 0 22 23" fill="none" stroke="currentColor" strokeWidth="1.200" aria-hidden="true">
            <path d="M1.500 11V5a2 2 0 0 1 2-2h15a2 2 0 0 1 2 2v14a2 2 0 0 1-2 2H12M1.500 7.500h19M6.500 0v5M15.500 0v5M0 17h8M5 13.500L8.500 17 5 20.500" />
          </svg>
        </button>
        <span className="ml-auto font-[Open_Sans] text-[15px]">10:25:09 UTC+7</span>
      </div>
    </section>
  );
}

function BottomPanel() {
  return (
    <footer className="mt-1 flex h-[43px] shrink-0 items-center rounded-t-md bg-[#0f0f0f] pr-3 pl-[18px] text-base">
      <button className="whitespace-nowrap">Trình chỉnh sửa Pine Editor</button>
      <button className="ml-[33px] whitespace-nowrap">Bảng Giao dịch</button>
      <button className="ml-auto" aria-label="Mở bảng điều khiển">
        <svg width="20" height="9" viewBox="0 0 20 9" fill="none" stroke="currentColor" strokeWidth="1.200" aria-hidden="true">
          <path d="M.500 8.500L10 1l9.500 7.500" />
        </svg>
      </button>
      <button className="ml-5" aria-label="Phóng to bảng điều khiển">
        <svg width="19" height="19" viewBox="0 0 19 19" fill="none" stroke="currentColor" strokeWidth="1.200" aria-hidden="true">
          <path d="M.600 6.500V3a2 2 0 0 1 2-2h14a2 2 0 0 1 2 2v3.500M.600 12.500V16a2 2 0 0 0 2 2h14a2 2 0 0 0 2-2v-3.500" />
        </svg>
      </button>
    </footer>
  );
}

function FavouritesBar() {
  return (
    <div className="absolute bottom-[25px] left-[688px] flex h-[43px] w-[754px] items-center rounded-md bg-[#1f1f1f]">
      <div className="grid w-[26px] shrink-0 grid-cols-2 gap-x-[5px] gap-y-1 pr-2 pl-[9px]">
        {[0, 1, 2, 3, 4, 5].map((dot) => (
          <span key={dot} className="h-0.5 w-0.5 bg-[#575757]" />
        ))}
      </div>
      {favouriteTools.map((tool) => (
        <button key={tool.label} className="flex flex-1 justify-center" aria-label={tool.label}>
          <Icon size={30} className="overflow-visible">{tool.icon}</Icon>
        </button>
      ))}
    </div>
  );
}

export default function App() {
  return (
    <div className="relative flex h-screen flex-col overflow-hidden bg-[#2e2e2e] font-[Liberation_Sans,Arial,sans-serif] text-[#dbdbdb]">
      <TopBar />
      <div className="mt-1 flex min-h-0 flex-1">
        <LeftBar />
        <main className="mr-[5px] ml-1 flex min-w-0 flex-1 flex-col">
          <Chart />
          <BottomPanel />
        </main>
        <RightBar />
      </div>
      <FavouritesBar />
    </div>
  );
}
